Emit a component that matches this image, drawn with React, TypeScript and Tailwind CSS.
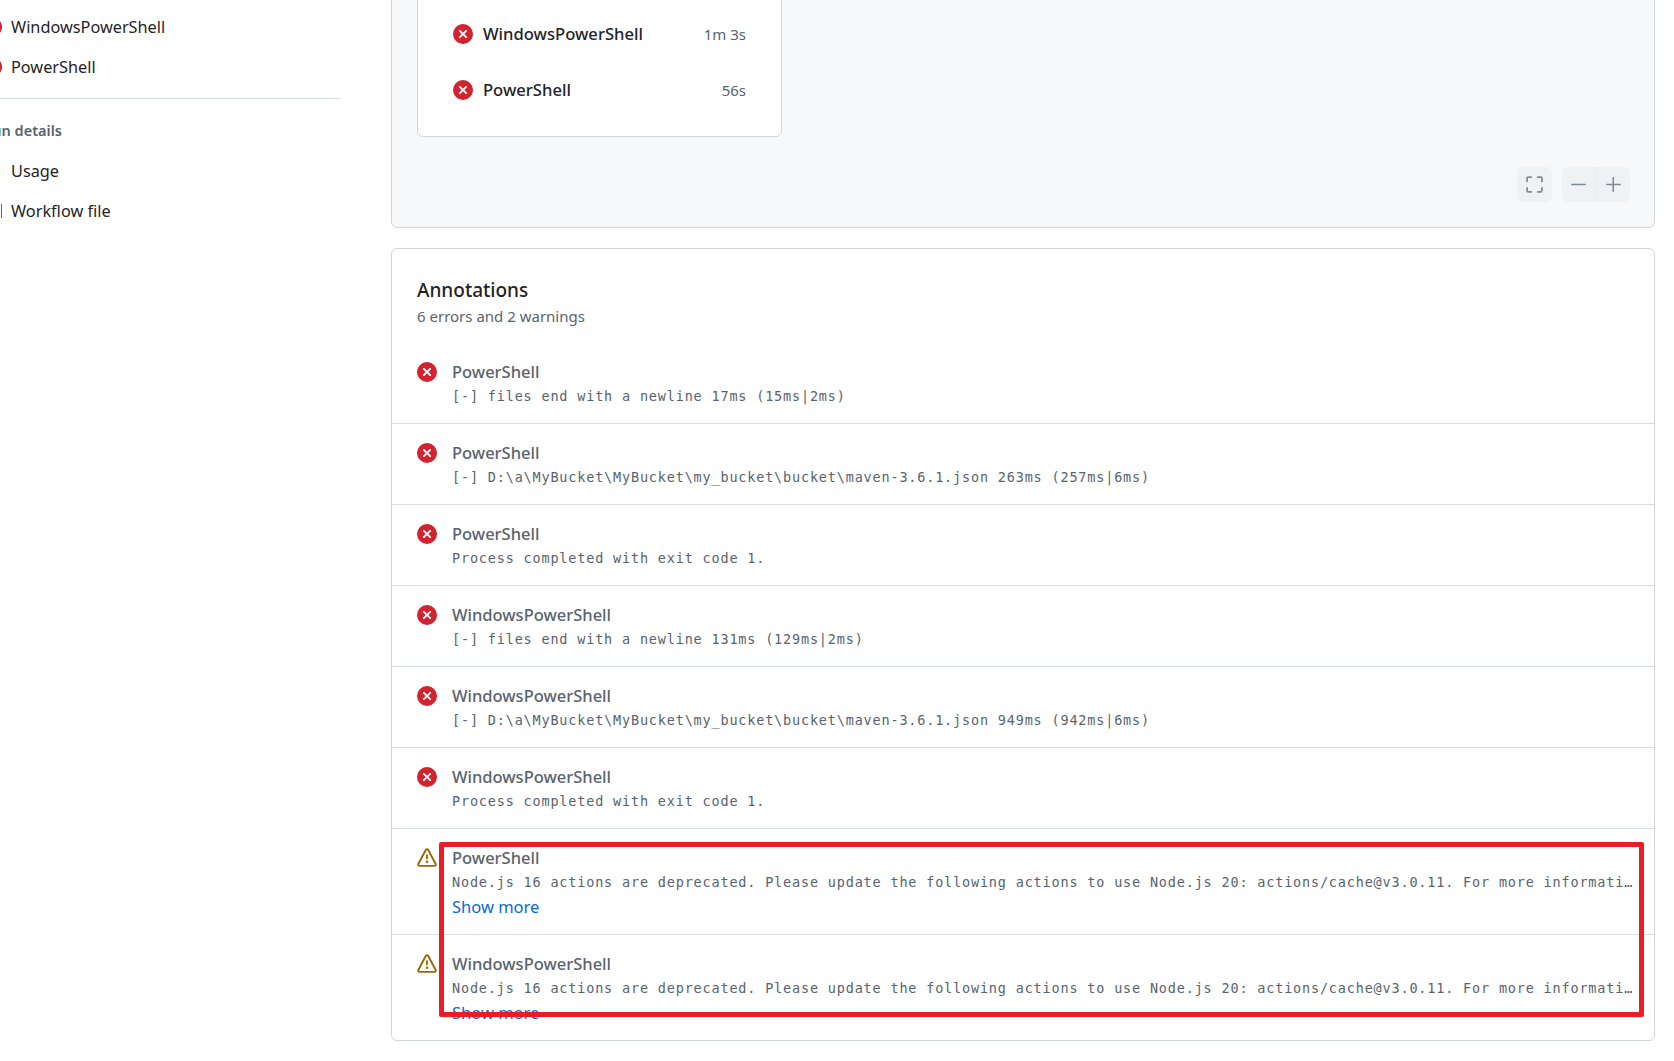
const sans = "font-['Noto_Sans',sans-serif]";

interface Annotation {
  job: string;
  message: string;
  warning?: boolean;
}

const annotations: Annotation[] = [
  { job: "PowerShell", message: "[-] files end with a newline 17ms (15ms|2ms)" },
  { job: "PowerShell", message: "[-] D:\\a\\MyBucket\\MyBucket\\my_bucket\\bucket\\maven-3.6.1.json 263ms (257ms|6ms)" },
  { job: "PowerShell", message: "Process completed with exit code 1." },
  { job: "WindowsPowerShell", message: "[-] files end with a newline 131ms (129ms|2ms)" },
  { job: "WindowsPowerShell", message: "[-] D:\\a\\MyBucket\\MyBucket\\my_bucket\\bucket\\maven-3.6.1.json 949ms (942ms|6ms)" },
  { job: "WindowsPowerShell", message: "Process completed with exit code 1." },
  {
    job: "PowerShell",
    warning: true,
    message:
      "Node.js 16 actions are deprecated. Please update the following actions to use Node.js 20: actions/cache@v3.0.11. For more information see: https://github.blog/changelog/2023-09-22-github-actions-transitioning-from-node-16-to-node-20/.",
  },
  {
    job: "WindowsPowerShell",
    warning: true,
    message:
      "Node.js 16 actions are deprecated. Please update the following actions to use Node.js 20: actions/cache@v3.0.11. For more information see: https://github.blog/changelog/2023-09-22-github-actions-transitioning-from-node-16-to-node-20/.",
  },
];

function ErrorIcon() {
  return (
    <svg viewBox="0 0 16 16" className="h-5 w-5 shrink-0 fill-[#d1242f]">
      <path d="M2.343 13.657A8 8 0 1 1 13.658 2.343 8 8 0 0 1 2.343 13.657ZM6.03 4.97a.751.751 0 0 0-1.042.018.751.751 0 0 0-.018 1.042L6.94 8 4.97 9.97a.749.749 0 0 0 .326 1.275.749.749 0 0 0 .734-.215L8 9.06l1.97 1.97a.749.749 0 0 0 1.275-.326.749.749 0 0 0-.215-.734L9.06 8l1.97-1.97a.749.749 0 0 0-.326-1.275.749.749 0 0 0-.734.215L8 6.94Z" />
    </svg>
  );
}

function WarningIcon() {
  return (
    <svg viewBox="0 0 16 16" className="h-5 w-5 shrink-0 fill-[#9a6700]">
      <path d="M6.457 1.047c.659-1.234 2.427-1.234 3.086 0l6.082 11.378A1.75 1.75 0 0 1 14.082 15H1.918a1.75 1.75 0 0 1-1.543-2.575Zm1.763.707a.25.25 0 0 0-.44 0L1.698 13.132a.25.25 0 0 0 .22.368h12.164a.25.25 0 0 0 .22-.368Zm.53 3.996v2.5a.75.75 0 0 1-1.5 0v-2.5a.75.75 0 0 1 1.5 0ZM9 11a1 1 0 1 1-2 0 1 1 0 0 1 2 0Z" />
    </svg>
  );
}

function SideItem({ label, icon }: { label: string; icon: React.ReactNode }) {
  return (
    <div className="flex h-10 items-center gap-[9px] text-[16.3px] text-[#1f2328]">
      <span className="flex w-5 shrink-0 justify-center">{icon}</span>
      {label}
    </div>
  );
}

function Sidebar() {
  return (
    <aside className="ml-[-18px] w-[359px] shrink-0 pt-[7px]">
      <SideItem label="WindowsPowerShell" icon={<ErrorIcon />} />
      <SideItem label="PowerShell" icon={<ErrorIcon />} />
      <div className="mt-[11px] border-t border-[#d8dee4]" />
      <div className="mt-[21px] h-[20px] pl-[1px] text-[14.5px] leading-5 font-semibold text-[#59636e]">Run details</div>
      <div className="mt-[11px]">
        <SideItem label="Usage" icon={null} />
        <SideItem
          label="Workflow file"
          icon={<span className="ml-[19px] h-[14px] w-[2px] bg-[#59636e]" />}
        />
      </div>
    </aside>
  );
}

function JobRow({ name, time }: { name: string; time: string }) {
  return (
    <div className="flex h-14 items-center gap-[10px]">
      <ErrorIcon />
      <span className="flex-1 text-[16.6px] font-medium text-[#1f2328]">{name}</span>
      <span className="text-[15px] text-[#59636e]">{time}</span>
    </div>
  );
}

function GraphPanel() {
  return (
    <section className="relative h-[266px] rounded-md border border-[#d0d7de] bg-[#f6f8fa]">
      <div className="ml-[25px] h-[174px] w-[365px] rounded-md border border-[#d0d7de] bg-white pt-[42px] pr-[35px] pl-[35px]">
        <JobRow name="WindowsPowerShell" time="1m 3s" />
        <JobRow name="PowerShell" time="56s" />
      </div>
      <div className="absolute right-[24px] bottom-[25px] flex gap-[10px]">
        <div className="flex h-[35px] w-[35px] items-center justify-center rounded-md bg-[#eff2f5]">
          <svg viewBox="0 0 16 16" className="h-[19px] w-[19px] fill-[#818b98]">
            <path d="M1.75 10a.75.75 0 0 1 .75.75v2.5c0 .138.112.25.25.25h2.5a.75.75 0 0 1 0 1.5h-2.5A1.75 1.75 0 0 1 1 13.25v-2.5a.75.75 0 0 1 .75-.75Zm12.5 0a.75.75 0 0 1 .75.75v2.5A1.75 1.75 0 0 1 13.25 15h-2.5a.75.75 0 0 1 0-1.5h2.5a.25.25 0 0 0 .25-.25v-2.5a.75.75 0 0 1 .75-.75ZM2.75 2.5a.25.25 0 0 0-.25.25v2.5a.75.75 0 0 1-1.5 0v-2.5C1 1.784 1.784 1 2.75 1h2.5a.75.75 0 0 1 0 1.5ZM10 1.75a.75.75 0 0 1 .75-.75h2.5c.966 0 1.75.784 1.75 1.75v2.5a.75.75 0 0 1-1.5 0v-2.5a.25.25 0 0 0-.25-.25h-2.5a.75.75 0 0 1-.75-.75Z" />
          </svg>
        </div>
        <div className="flex h-[35px] w-[68px] rounded-md bg-[#eff2f5]">
          <div className="flex w-[34px] items-center justify-center border-r border-[#ebeef1]">
            <svg viewBox="0 0 16 16" className="h-[17px] w-[17px] fill-[#818b98]">
              <path d="M1.75 7.25h12.5a.75.75 0 0 1 0 1.5H1.75a.75.75 0 0 1 0-1.5Z" />
            </svg>
          </div>
          <div className="flex w-[34px] items-center justify-center">
            <svg viewBox="0 0 16 16" className="h-[17px] w-[17px] fill-[#818b98]">
              <path d="M7.75 1a.75.75 0 0 1 .75.75v5.5h5.75a.75.75 0 0 1 0 1.5H8.5v5.5a.75.75 0 0 1-1.5 0v-5.5H1.75a.75.75 0 0 1 0-1.5H7v-5.5A.75.75 0 0 1 7.75 1Z" />
            </svg>
          </div>
        </div>
      </div>
    </section>
  );
}

function AnnotationRow({ item, first }: { item: Annotation; first: boolean }) {
  return (
    <div
      className={`flex gap-[15px] pt-[17px] pl-[25px] ${item.warning ? "pb-[14px]" : "pb-[15px]"} ${
        first ? "" : "border-t border-[#d8dee4]"
      }`}
    >
      <div className="flex h-6 shrink-0 items-center">{item.warning ? <WarningIcon /> : <ErrorIcon />}</div>
      <div className="min-w-0 flex-1 pr-[18px]">
        <div className="h-6 text-[16.5px] leading-6 font-medium text-[#59636e]">{item.job}</div>
        <div className="truncate font-['DejaVu_Sans_Mono',monospace] text-[13.5px] leading-6 tracking-[0.82px] text-[#59636e]">
          {item.message}
        </div>
        {item.warning && <div className="h-[26px] text-[16.5px] leading-[26px] text-[#0969da]">Show more</div>}
      </div>
    </div>
  );
}

function AnnotationsPanel() {
  return (
    <section className="mt-5 rounded-md border border-[#d0d7de] bg-white">
      <div className="pt-[28px] pb-[15px] pl-[25px]">
        <h2 className="text-[19px] leading-[26px] font-medium text-[#1f2328]">Annotations</h2>
        <p className="mt-px text-[15px] leading-6 text-[#59636e]">6 errors and 2 warnings</p>
      </div>
      {annotations.map((item, index) => (
        <AnnotationRow key={index} item={item} first={index === 0} />
      ))}
    </section>
  );
}

export default function App() {
  return (
    <div className={`relative flex h-[1061px] overflow-hidden bg-white ${sans}`}>
      <Sidebar />
      <main className="mt-[-38px] mr-[19px] ml-[50px] min-w-0 flex-1">
        <GraphPanel />
        <AnnotationsPanel />
      </main>
      {/* red highlight drawn over the screenshot */}
      <div className="absolute top-[842px] left-[439px] h-[175px] w-[1205px] rounded-[2px] border-[5px] border-[#ed1c24]" />
    </div>
  );
}
